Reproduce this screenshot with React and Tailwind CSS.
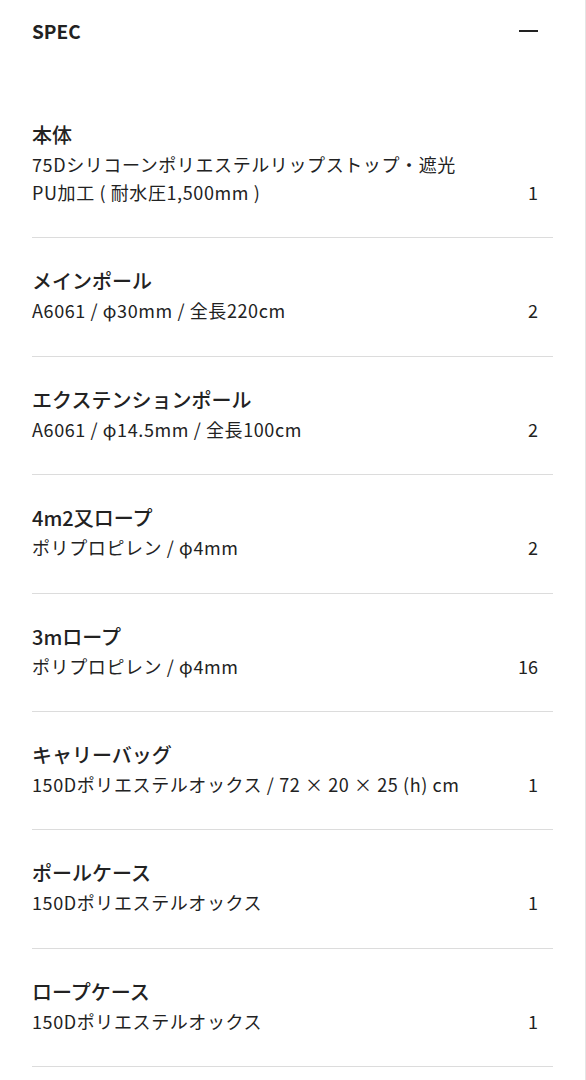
const specs = [
  {
    name: "本体",
    lines: ["75Dシリコーンポリエステルリップストップ・遮光", "PU加工 ( 耐水圧1,500mm )"],
    qty: "1",
  },
  { name: "メインポール", lines: ["A6061 / φ30mm / 全長220cm"], qty: "2" },
  { name: "エクステンションポール", lines: ["A6061 / φ14.5mm / 全長100cm"], qty: "2" },
  { name: "4m2又ロープ", lines: ["ポリプロピレン / φ4mm"], qty: "2" },
  { name: "3mロープ", lines: ["ポリプロピレン / φ4mm"], qty: "16" },
  { name: "キャリーバッグ", lines: ["150Dポリエステルオックス / 72 × 20 × 25 (h) cm"], qty: "1" },
  { name: "ポールケース", lines: ["150Dポリエステルオックス"], qty: "1" },
  { name: "ロープケース", lines: ["150Dポリエステルオックス"], qty: "1" },
];

export default function App() {
  return (
    <div
      className="w-[586px] min-h-[1080px] bg-white border-r border-[#e4e4e4] text-[#222]"
      style={{ fontFamily: '"Noto Sans CJK JP", sans-serif' }}
    >
      <div className="px-[32px]">
        {/* header */}
        <div className="h-[62px] flex items-center justify-between">
          <span className="text-[19px] font-bold">SPEC</span>
          <span className="block w-[19px] h-[2px] bg-[#222] mr-[15px]" />
        </div>

        {/* rows */}
        <div className="pt-[58px]">
          {specs.map((s, i) => (
            <div
              key={i}
              className={`border-b border-[#dcdcdc] pb-[31.4px] ${i === 0 ? "" : "pt-[28px]"}`}
            >
              <div className="text-[20px] leading-[30px] font-medium">{s.name}</div>
              <div className="flex items-end">
                <div className="flex-1 text-[18px] leading-[28px] tracking-[0.6px]">
                  {s.lines.map((l, j) => (
                    <div key={j}>{l}</div>
                  ))}
                </div>
                <div className="w-[60px] pr-[15px] text-right text-[18px] leading-[28px]">
                  {s.qty}
                </div>
              </div>
            </div>
          ))}
        </div>
      </div>
    </div>
  );
}
